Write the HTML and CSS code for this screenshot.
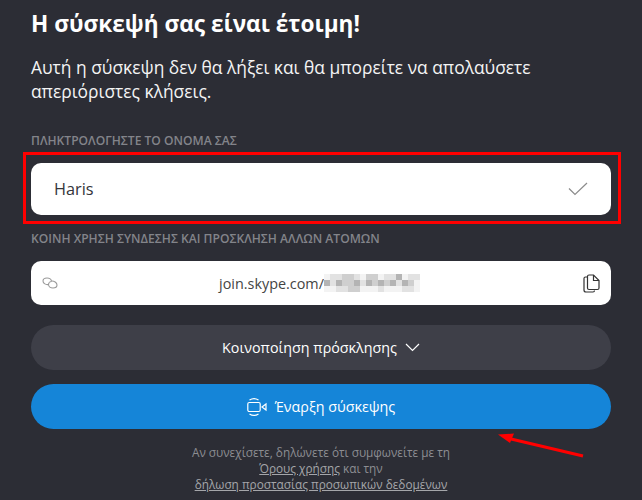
FILE: index.html
```html
<!DOCTYPE html>
<html lang="el">
<head>
<meta charset="utf-8">
<title>Η σύσκεψή σας είναι έτοιμη!</title>
<link rel="stylesheet" href="styles.css">
</head>
<body>
<main class="panel">
  <h1 class="title">Η σύσκεψή σας είναι έτοιμη!</h1>
  <p class="lead">Αυτή η σύσκεψη δεν θα λήξει και θα μπορείτε να απολαύσετε απεριόριστες κλήσεις.</p>

  <div class="label label-name">ΠΛΗΚΤΡΟΛΟΓΗΣΤΕ ΤΟ ΟΝΟΜΑ ΣΑΣ</div>
  <div class="field field-name">
    <span class="name">Haris</span>
    <svg class="check" width="20" height="14" viewBox="0 0 20 14"><path d="M1 6.5 L7 12.5 L19 1" fill="none" stroke="#8b8b8b" stroke-width="1.2"/></svg>
  </div>

  <div class="label label-share">ΚΟΙΝΗ ΧΡΗΣΗ ΣΥΝΔΕΣΗΣ ΚΑΙ ΠΡΟΣΚΛΗΣΗ ΑΛΛΩΝ ΑΤΟΜΩΝ</div>
  <div class="field field-link">
    <svg class="link-icon" width="16" height="12" viewBox="0 0 16 12" fill="none" stroke="#9a9a9a" stroke-width="1.1">
      <path d="M6.5 7.5 C4 8 1 6.5 1 4 C1 2 3 1 5 1 C7.5 1 9.5 2.5 9.5 4.5"/>
      <path d="M9.5 4 C12 3.8 15 5.5 15 8 C15 10 13 11 11 11 C8.5 11 6.5 9.5 6.5 7.5 C6.5 6 8 4.5 9.5 4.5"/>
    </svg>
    <span class="url">join.skype.com/<svg class="mosaic" width="96" height="18" viewBox="0 0 16 3" shape-rendering="crispEdges">
      <g fill="#f3f3f3"><rect x="0" y="2" width="16" height="1"/><rect x="0" y="0" width="16" height="1"/><rect x="0" y="1" width="16" height="1"/></g>
      <g fill="#e2e2e2"><rect x="1" y="0" width="2" height="1"/><rect x="5" y="0" width="1" height="1"/><rect x="10" y="0" width="2" height="1"/><rect x="14" y="0" width="2" height="1"/><rect x="1" y="1" width="1" height="1"/><rect x="6" y="1" width="1" height="1"/><rect x="12" y="1" width="1" height="1"/><rect x="2" y="2" width="2" height="1"/><rect x="9" y="2" width="1" height="1"/><rect x="13" y="2" width="2" height="1"/></g>
      <g fill="#cfcfcf"><rect x="3" y="0" width="2" height="1"/><rect x="7" y="0" width="2" height="1"/><rect x="3" y="1" width="2" height="1"/><rect x="8" y="1" width="1" height="1"/><rect x="10" y="1" width="1" height="1"/><rect x="14" y="1" width="1" height="1"/><rect x="4" y="2" width="2" height="1"/></g>
      <g fill="#b4b4b4"><rect x="12" y="0" width="1" height="1"/><rect x="0" y="1" width="1" height="1"/><rect x="2" y="1" width="1" height="1"/><rect x="5" y="1" width="1" height="1"/><rect x="7" y="1" width="1" height="1"/><rect x="9" y="1" width="1" height="1"/><rect x="11" y="1" width="1" height="1"/><rect x="13" y="1" width="1" height="1"/></g>
    </svg></span>
    <svg class="copy-icon" width="17" height="19" viewBox="0 0 17 19" fill="none" stroke="#333" stroke-width="1.2">
      <path d="M4.5 3 H2.5 Q1 3 1 4.5 V16 Q1 18 3 18 H10 Q11.5 18 11.5 16.5"/>
      <path d="M4.5 2.5 Q4.5 1 6 1 H10.5 L16 6.5 V14 Q16 15.5 14.5 15.5 H6 Q4.5 15.5 4.5 14 Z"/>
      <path d="M10.5 1 V6.5 H16"/>
    </svg>
  </div>

  <button class="pill pill-share" type="button">Κοινοποίηση πρόσκλησης
    <svg width="15" height="9" viewBox="0 0 15 9"><path d="M1 1 L7.5 7.5 L14 1" fill="none" stroke="#fff" stroke-width="1.2"/></svg>
  </button>
  <button class="pill pill-start" type="button">
    <svg width="20" height="20" viewBox="0 0 20 20" fill="none" stroke="#fff" stroke-width="1.2">
      <rect x="0.8" y="5.5" width="12.4" height="9" rx="1.5"/>
      <path d="M15 10 L19 7 V13 Z"/>
      <path d="M2.5 3 Q7 0.2 11.5 3"/>
      <path d="M2.5 17 Q7 19.8 11.5 17"/>
    </svg>
    Έναρξη σύσκεψης
  </button>

  <p class="legal">Αν συνεχίσετε, δηλώνετε ότι συμφωνείτε με τη<br><a href="#">Όρους χρήσης</a> και την<br><a href="#">δήλωση προστασίας προσωπικών δεδομένων</a></p>
</main>

<div class="highlight"></div>
<svg class="arrow" width="90" height="28" viewBox="0 0 90 28"><path d="M86 24 L12 6.5" stroke="#f00" stroke-width="3"/><path d="M1 2.5 L17 1.5 L13 11 Z" fill="#f00"/></svg>
</body>
</html>
```
FILE: styles.css
```css
* { box-sizing: border-box; }
html, body { margin: 0; height: 500px; overflow: hidden; }
body {
  position: relative;
  background: #2c2d35;
  color: #fff;
  font-family: "Open Sans", "Noto Sans", sans-serif;
}
.panel { display: flex; flex-direction: column; padding: 0 31px; }
.title { margin: 8px 0 0; font-size: 22.6px; line-height: 32px; font-weight: 700; }
.lead { margin: 15px 0 0; font-size: 17.4px; line-height: 24px; color: #f4f4f4; }
.label { font-size: 12.1px; font-weight: 600; line-height: 14px; color: #83848a; }
.label-name { margin-top: 31px; }
.label-share { margin-top: 17px; }
.field { display: flex; align-items: center; justify-content: space-between; background: #fff; border-radius: 10px; }
.field-name { height: 52px; margin-top: 15px; padding: 0 23px; }
.name { font-size: 16.3px; color: #33343a; }
.check { display: block; }
.field-link { height: 44px; margin-top: 15px; padding: 0 11px; }
.link-icon { display: block; }
.url { display: flex; align-items: center; font-size: 14.4px; color: #444; margin-left: -2px; }
.mosaic { display: block; }
.copy-icon { display: block; }
.pill { display: flex; align-items: center; justify-content: center; gap: 8px; width: 100%; height: 45px; border: 0; border-radius: 23px; color: #fff; font: 500 14.3px "Open Sans", "Noto Sans", sans-serif; }
.pill-share { margin-top: 20px; background: #3e3f48; }
.pill-start { margin-top: 14px; background: #1585d8; }
.legal { margin: 15px 0 0; font-size: 11.8px; line-height: 16px; text-align: center; color: #8d8e93; }
.legal a { color: #a5a6aa; }
.highlight { position: absolute; left: 23px; top: 152px; width: 598px; height: 72px; border: 3px solid #f00; }
.arrow { position: absolute; left: 497px; top: 432px; }
```
